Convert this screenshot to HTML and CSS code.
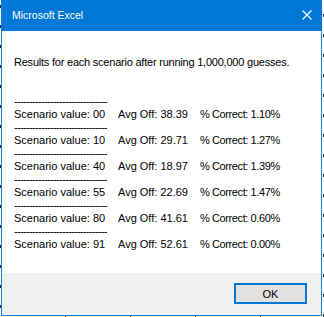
FILE: index.html
```html
<!DOCTYPE html>
<html lang="en">
<head>
    <meta charset="UTF-8">
    <title>Microsoft Excel</title>
    <link rel="stylesheet" href="styles.css">
</head>
<body>
    <div class="dialog">
        <div class="titlebar">
            <span class="title">Microsoft Excel</span>
            <svg class="close" width="10" height="10" viewBox="0 0 10 10">
                <path d="M0.5 0.5 L9.5 9.5 M9.5 0.5 L0.5 9.5" stroke="#fff" stroke-width="1.1" fill="none"/>
            </svg>
        </div>

        <div class="content">
            <p class="message">Results for each scenario after running 1,000,000 guesses.</p>

            <div class="results">
                <div class="dashes">-------------------------------</div>
                <div class="row"><span>Scenario value: 00</span><span>Avg Off: 38.39</span><span class="pct">% Correct: 1.10%</span></div>
                <div class="dashes">-------------------------------</div>
                <div class="row"><span>Scenario value: 10</span><span>Avg Off: 29.71</span><span class="pct">% Correct: 1.27%</span></div>
                <div class="dashes">-------------------------------</div>
                <div class="row"><span>Scenario value: 40</span><span>Avg Off: 18.97</span><span class="pct">% Correct: 1.39%</span></div>
                <div class="dashes">-------------------------------</div>
                <div class="row"><span>Scenario value: 55</span><span>Avg Off: 22.69</span><span class="pct">% Correct: 1.47%</span></div>
                <div class="dashes">-------------------------------</div>
                <div class="row"><span>Scenario value: 80</span><span>Avg Off: 41.61</span><span class="pct">% Correct: 0.60%</span></div>
                <div class="dashes">-------------------------------</div>
                <div class="row"><span>Scenario value: 91</span><span>Avg Off: 52.61</span><span class="pct">% Correct: 0.00%</span></div>
            </div>
        </div>

        <div class="footer">
            <button class="ok">OK</button>
        </div>
    </div>
</body>
</html>
```

FILE: styles.css
```css
html, body {
    margin: 0;
    height: 100%;
}

/* excel sheet behind the box, only its grid ticks show */
body {
    background-color: #fff;
    background-image:
        repeating-linear-gradient(to bottom, #222 0 3px, transparent 3px 20px),
        repeating-linear-gradient(to bottom, #222 0 3px, transparent 3px 20px),
        repeating-linear-gradient(to right, #222 0 1px, transparent 1px 65px);
    background-size: 1px 100%, 1px 100%, 100% 1px;
    background-position: 0 5px, 323px 14px, 65px 316px;
    background-repeat: no-repeat;
    font-family: "Liberation Sans", Arial, sans-serif;
    font-size: 11px;
    color: #000;
}

.dialog {
    margin-left: 1px;
    width: 321px;
    height: 316px;
    box-sizing: border-box;
    border: 1px solid #1a82d8;
    border-top: none;
    display: flex;
    flex-direction: column;
    background: #fff;
}

.titlebar {
    height: 31px;
    margin: 0 -1px;
    background-color: #0078d7;
    display: flex;
    align-items: center;
    justify-content: space-between;
    padding: 0 10px 0 11px;
    color: #fff;
}

.title {
    font-size: 10.5px;
    margin-top: -1px;
}

.close {
    margin-top: -2px;
}

.content {
    height: 242px;
    padding-left: 12px;
    line-height: 13px;
}

.message {
    margin: 25px 0 0 0;
    letter-spacing: -0.22px;
}

.results {
    margin-top: 26px;
}

.dashes {
    letter-spacing: -0.67px;
    height: 13px;
}

.row {
    display: grid;
    grid-template-columns: 104px 82px auto;
    height: 13px;
}

.pct {
    letter-spacing: -0.4px;
}

.footer {
    flex: 1;
    background-color: #f0f0f0;
    display: flex;
    justify-content: flex-end;
    align-items: flex-start;
    padding: 10px 14px 0 0;
}

.ok {
    width: 73px;
    height: 21px;
    margin: 0;
    padding: 0;
    border: 2px solid #0078d7;
    background-color: #e1e1e1;
    font-family: "Liberation Sans", Arial, sans-serif;
    font-size: 11px;
    color: #000;
}
```
